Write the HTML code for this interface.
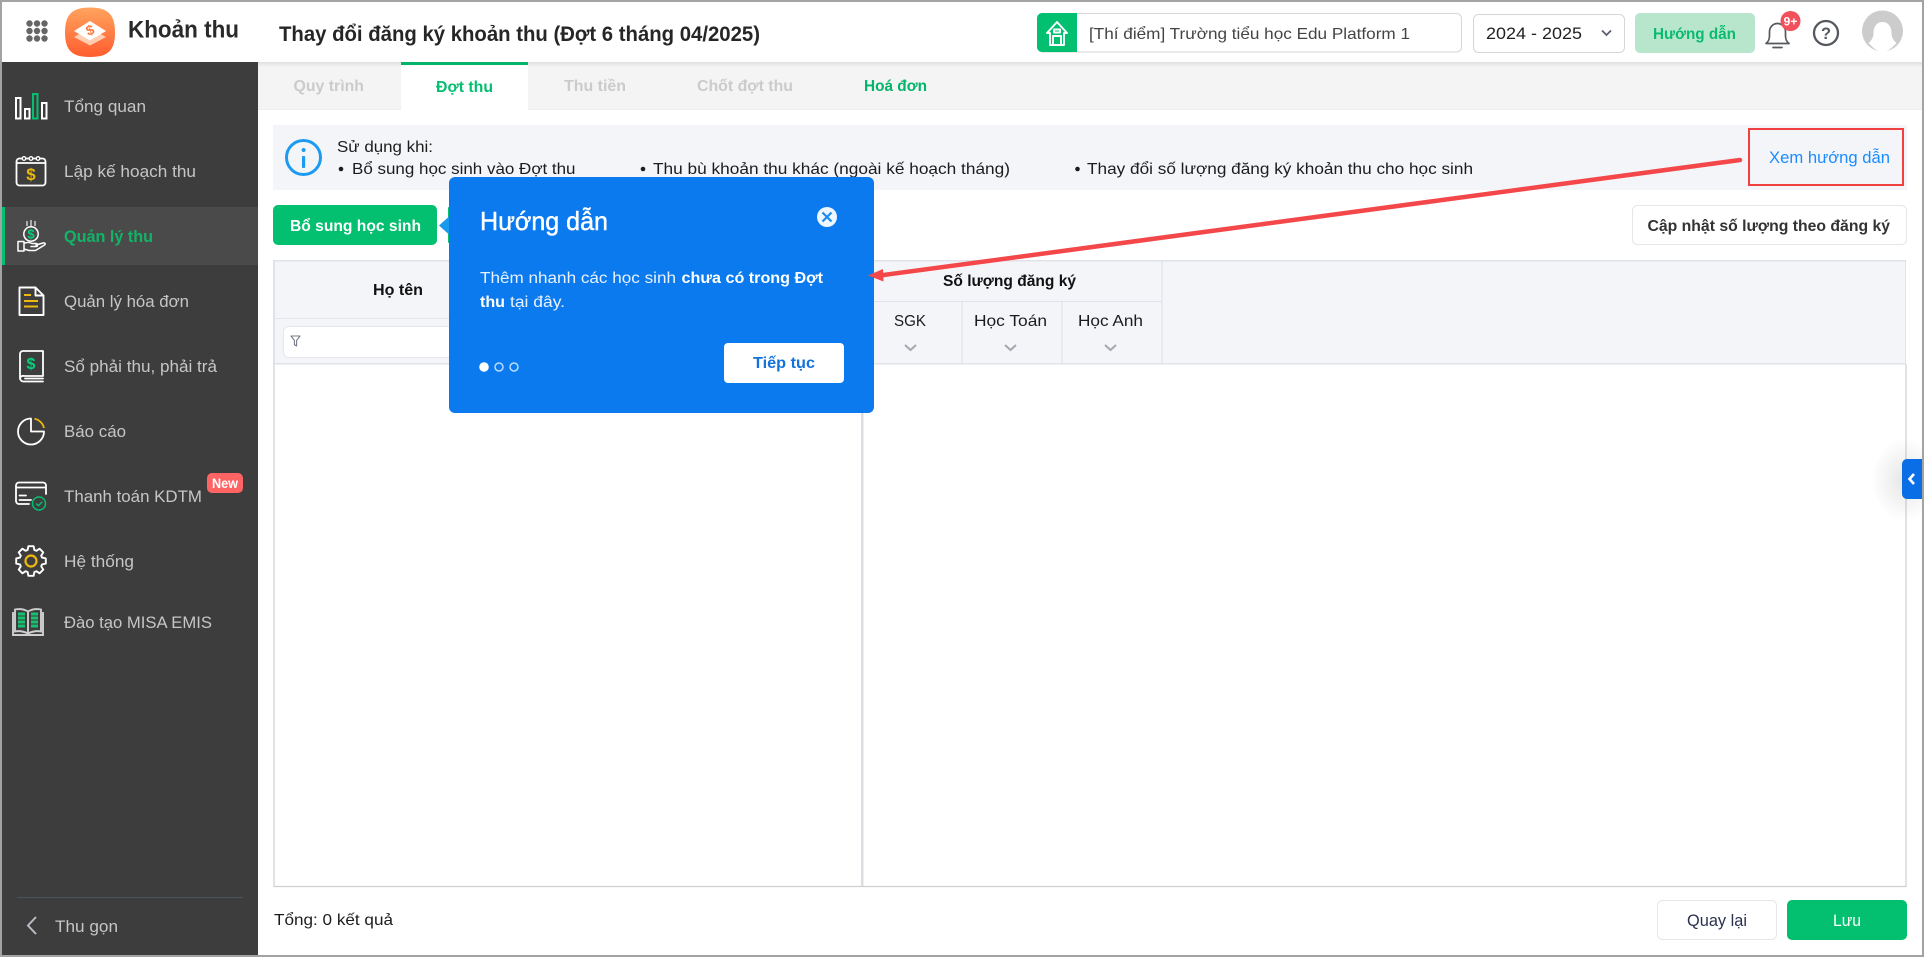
<!DOCTYPE html>
<html lang="vi">
<head>
<meta charset="utf-8">
<title>Khoản thu</title>
<style>
html,body{margin:0;padding:0;background:#fff;width:1924px;height:957px;overflow:hidden}
svg{display:block}
text{font-family:"Liberation Sans","DejaVu Sans",sans-serif}
.side{font-size:16.5px;fill:#c6c6c6}
.b{font-weight:bold}
.ban{font-size:16px;fill:#1c1c1c}
.tab{font-size:16px;font-weight:bold;fill:#cbcbcb}
.pop{font-size:15.5px;fill:#e8f2ff}
.ic{fill:none;stroke:#fff;stroke-width:1.8;stroke-linejoin:round;stroke-linecap:round}
</style>
</head>
<body>
<svg xmlns="http://www.w3.org/2000/svg" width="1924" height="957" viewBox="0 0 1924 957">
<defs>
<linearGradient id="lg" x1="0" y1="0" x2="0" y2="1"><stop offset="0" stop-color="#ffa45e"/><stop offset="1" stop-color="#ff5c2e"/></linearGradient>
<linearGradient id="sh" x1="0" y1="0" x2="0" y2="1"><stop offset="0" stop-color="#000" stop-opacity=".08"/><stop offset="1" stop-color="#000" stop-opacity="0"/></linearGradient>
<radialGradient id="tabsh"><stop offset="0" stop-color="#000" stop-opacity=".1"/><stop offset="1" stop-color="#000" stop-opacity="0"/></radialGradient>
</defs>

<!-- page -->
<rect width="1924" height="957" fill="#fff"/>

<!-- tab strip -->
<rect x="258" y="62" width="1664" height="48" fill="#f4f4f4"/>
<rect x="258" y="109" width="1664" height="1" fill="#eeeeee"/>
<rect x="401" y="62" width="127" height="48" fill="#fff"/>
<rect x="258" y="62" width="1664" height="5" fill="url(#sh)"/>
<rect x="401" y="62" width="127" height="3" fill="#03b46a"/>
<text class="tab" x="293.5" y="91" textLength="70.5" lengthAdjust="spacingAndGlyphs">Quy trình</text>
<text class="tab" x="436" y="92" textLength="57" lengthAdjust="spacingAndGlyphs" style="fill:#03bf70">Đợt thu</text>
<text class="tab" x="564" y="91" textLength="62" lengthAdjust="spacingAndGlyphs">Thu tiền</text>
<text class="tab" x="697" y="91" textLength="96" lengthAdjust="spacingAndGlyphs">Chốt đợt thu</text>
<text class="tab" x="864" y="91" textLength="63" lengthAdjust="spacingAndGlyphs" style="fill:#03b46a">Hoá đơn</text>

<!-- info banner -->
<rect x="273" y="125" width="1634" height="65" fill="#f3f5f9"/>
<circle cx="303.5" cy="157.5" r="17" fill="none" stroke="#1d9bf0" stroke-width="3"/>
<rect x="302" y="156" width="3.2" height="12" rx="1" fill="#1d9bf0"/>
<circle cx="303.6" cy="150" r="2" fill="#1d9bf0"/>
<text class="ban" x="337" y="152" textLength="96" lengthAdjust="spacingAndGlyphs">Sử dụng khi:</text>
<circle cx="341" cy="169" r="2.3" fill="#1c1c1c"/>
<text class="ban" x="352" y="174" textLength="223.5" lengthAdjust="spacingAndGlyphs">Bổ sung học sinh vào Đợt thu</text>
<circle cx="643" cy="169" r="2.3" fill="#1c1c1c"/>
<text class="ban" x="653" y="174" textLength="357" lengthAdjust="spacingAndGlyphs">Thu bù khoản thu khác (ngoài kế hoạch tháng)</text>
<circle cx="1077.5" cy="169" r="2.3" fill="#1c1c1c"/>
<text class="ban" x="1087" y="174" textLength="386" lengthAdjust="spacingAndGlyphs">Thay đổi số lượng đăng ký khoản thu cho học sinh</text>
<rect x="1749" y="129" width="154" height="56" fill="none" stroke="#f0403f" stroke-width="2"/>
<text x="1769" y="163" font-size="16.5" fill="#1a8cff" textLength="121" lengthAdjust="spacingAndGlyphs">Xem hướng dẫn</text>

<!-- action buttons -->
<rect x="273" y="205" width="164" height="40" rx="5" fill="#03bf70"/>
<text x="290" y="231" font-size="16" font-weight="bold" fill="#fff" textLength="131" lengthAdjust="spacingAndGlyphs">Bổ sung học sinh</text>
<rect x="448" y="207" width="3" height="36" rx="1" fill="#03bf70"/>
<rect x="1632.5" y="205.5" width="274" height="39" rx="5" fill="#fff" stroke="#e4e6ea"/>
<text x="1647.5" y="231" font-size="16" font-weight="bold" fill="#333" textLength="242.5" lengthAdjust="spacingAndGlyphs">Cập nhật số lượng theo đăng ký</text>

<!-- table header -->
<rect x="273" y="260" width="1633" height="104" fill="#f3f5f9"/>
<rect x="273" y="260" width="1633" height="1.5" fill="#e1e3ea"/>
<rect x="273" y="318" width="589" height="1" fill="#e4e6ec"/>
<rect x="273" y="363" width="1633" height="1.5" fill="#e1e3ea"/>
<rect x="283.5" y="326.5" width="570" height="31" rx="5" fill="#fff" stroke="#e4e6ec"/>
<path d="M291 336h9l-3.4 4.4v5.6l-2.2-1.4v-4.2z" fill="none" stroke="#777a8a" stroke-width="1.1" stroke-linejoin="round"/>
<text x="373" y="295" font-size="16" font-weight="bold" fill="#111" textLength="50" lengthAdjust="spacingAndGlyphs">Họ tên</text>
<rect x="862" y="301" width="300" height="1" fill="#e0e2e9"/>
<rect x="961.5" y="301" width="1" height="63" fill="#dcdfe8"/>
<rect x="1061.5" y="301" width="1" height="63" fill="#dcdfe8"/>
<rect x="1161.5" y="260" width="1" height="104" fill="#dcdfe8"/>
<text x="943" y="286" font-size="16" font-weight="bold" fill="#111" textLength="133" lengthAdjust="spacingAndGlyphs">Số lượng đăng ký</text>
<text x="894" y="326" font-size="16" fill="#1c1c1c" textLength="32" lengthAdjust="spacingAndGlyphs">SGK</text>
<text x="974" y="326" font-size="16" fill="#1c1c1c" textLength="73" lengthAdjust="spacingAndGlyphs">Học Toán</text>
<text x="1078" y="326" font-size="16" fill="#1c1c1c" textLength="65" lengthAdjust="spacingAndGlyphs">Học Anh</text>
<path d="M905 345l5.500 5 5.500-5M1005 345l5.500 5 5.500-5M1105 345l5.500 5 5.500-5" fill="none" stroke="#a5a7ad" stroke-width="2"/>

<!-- table borders -->
<path d="M274 364V886.500H1906V364" fill="none" stroke="#d0d0d0" stroke-width="1.200"/>
<rect x="273" y="260" width="2" height="104" fill="#dfe2ea"/>
<rect x="1905" y="260" width="1" height="104" fill="#e1e3ea"/>
<rect x="861" y="364" width="2.500" height="522" fill="#dcdde2"/>

<!-- side tab -->
<ellipse cx="1905" cy="480" rx="34" ry="42" fill="url(#tabsh)"/>
<path d="M1922 459h-15a5 5 0 0 0-5 5v30a5 5 0 0 0 5 5h15z" fill="#0a6fe6"/>
<path d="M1914 474l-4.500 5 4.500 5" fill="none" stroke="#fff" stroke-width="2.600"/>

<!-- footer -->
<text x="274" y="925" font-size="16" fill="#1c1c1c" textLength="119" lengthAdjust="spacingAndGlyphs">Tổng: 0 kết quả</text>
<rect x="1657.500" y="900.500" width="119" height="39" rx="5" fill="#fff" stroke="#e4e6ea"/>
<text x="1687" y="926" font-size="16.500" fill="#2b3050" textLength="60" lengthAdjust="spacingAndGlyphs">Quay lại</text>
<rect x="1787" y="900" width="120" height="40" rx="5" fill="#03bf70"/>
<text x="1833" y="926" font-size="16.500" fill="#fff" textLength="28" lengthAdjust="spacingAndGlyphs">Lưu</text>

<!-- sidebar -->
<rect x="2" y="62" width="256" height="893" fill="#3d3d3d"/>
<rect x="2" y="207" width="256" height="58" fill="#4a4a4a"/>
<rect x="2" y="207" width="3" height="58" fill="#03bf70"/>

<text class="side" x="64" y="112" textLength="82" lengthAdjust="spacingAndGlyphs">Tổng quan</text>
<text class="side" x="64" y="177" textLength="132" lengthAdjust="spacingAndGlyphs">Lập kế hoạch thu</text>
<text class="side b" x="64" y="242" textLength="89" lengthAdjust="spacingAndGlyphs" style="fill:#12b468">Quản lý thu</text>
<text class="side" x="64" y="307" textLength="125" lengthAdjust="spacingAndGlyphs">Quản lý hóa đơn</text>
<text class="side" x="64" y="372" textLength="153" lengthAdjust="spacingAndGlyphs">Sổ phải thu, phải trả</text>
<text class="side" x="64" y="437" textLength="62" lengthAdjust="spacingAndGlyphs">Báo cáo</text>
<text class="side" x="64" y="502" textLength="138" lengthAdjust="spacingAndGlyphs">Thanh toán KDTM</text>
<text class="side" x="64" y="567" textLength="70" lengthAdjust="spacingAndGlyphs">Hệ thống</text>
<text class="side" x="64" y="628" textLength="148" lengthAdjust="spacingAndGlyphs">Đào tạo MISA EMIS</text>
<rect x="207" y="473" width="36" height="20" rx="5" fill="#ff6464"/>
<text x="212" y="488" font-size="14" font-weight="bold" fill="#fff" textLength="26" lengthAdjust="spacingAndGlyphs">New</text>
<rect x="17" y="897" width="226" height="1" fill="#4a525c"/>
<path d="M36 917l-8 8.500 8 8.500" fill="none" stroke="#b9bcc4" stroke-width="2"/>
<text class="side" x="55" y="932" textLength="63" lengthAdjust="spacingAndGlyphs">Thu gọn</text>

<!-- icon: Tong quan -->
<g class="ic" style="stroke-width:2;stroke-linecap:butt;stroke-linejoin:miter">
<rect x="16" y="98" width="4.500" height="20.500"/>
<rect x="25" y="109" width="4.500" height="9.500"/>
<rect x="42" y="103" width="4.500" height="15.500"/>
</g>
<rect x="33" y="94" width="4.500" height="24.500" fill="none" stroke="#03bf70" stroke-width="2"/>

<!-- icon: calendar -->
<rect class="ic" x="16.500" y="158.500" width="29" height="27" rx="3"/>
<path class="ic" d="M17 163H45"/>
<circle cx="24" cy="158.500" r="1.800" fill="#3d3d3d" stroke="#fff" stroke-width="1.300"/>
<circle cx="31" cy="158.500" r="1.800" fill="#3d3d3d" stroke="#fff" stroke-width="1.300"/>
<circle cx="38" cy="158.500" r="1.800" fill="#3d3d3d" stroke="#fff" stroke-width="1.300"/>
<text x="31" y="180" font-size="17" font-weight="bold" fill="#e9b80c" text-anchor="middle">$</text>

<!-- icon: hand coin -->
<path d="M27 221v5M31 220v7M35 221v5" fill="none" stroke="#d9d9d9" stroke-width="1.400"/>
<circle cx="31" cy="234" r="7.200" fill="none" stroke="#fff" stroke-width="1.500"/>
<text x="31" y="238.500" font-size="13" font-weight="bold" fill="#03d07a" text-anchor="middle">$</text>
<path class="ic" style="stroke-width:1.500" d="M18 241.500h6v9.500h-6zM24 243.500c3-1.500 5-1.500 8 0h4c2 0 2 3 0 3h-5M36 245l7-2c2-.5 3 1 1.500 2l-9 5.500H29l-5-1.500"/>

<!-- icon: invoice -->
<path class="ic" d="M19.500 287.500h16l8 8v19.500h-24zM35.500 287.500v8h8" style="stroke-width:1.900"/>
<path d="M24 295h7M24 301h14M24 306.500h14" stroke="#eeb90e" stroke-width="2" fill="none"/>

<!-- icon: book -->
<path class="ic" d="M43 351H23a3 3 0 0 0-3 3v24a3.500 3.500 0 0 0 3.500 3.500H43M43 351v25H24a3 3 0 0 0-4 3M25 378.500h18"/>
<text x="31" y="369" font-size="16" font-weight="bold" fill="#03d07a" text-anchor="middle">$</text>

<!-- icon: pie -->
<path class="ic" d="M31 418.500A13 13 0 1 0 44 431.500H31z"/>
<path d="M34.500 418.800A12 12 0 0 1 44 428" fill="none" stroke="#eeb90e" stroke-width="1.800"/>

<!-- icon: card -->
<path class="ic" d="M29 504H19a3 3 0 0 1-3-3V485.500a3 3 0 0 1 3-3H43a3 3 0 0 1 3 3V494M16.500 487.500H45.500M19.500 495.500H26M19.500 500H31"/>
<circle cx="39" cy="503.500" r="6.500" fill="#3d3d3d" stroke="#03bf70" stroke-width="1.500"/>
<path d="M36 503.500l2.300 2.300 4-4" fill="none" stroke="#03bf70" stroke-width="1.400"/>

<!-- icon: gear -->
<g transform="translate(31 561)">
<path d="M-3.400-11-2.600-14.800 2.600-14.800 3.400-11 5.400-10.200 8.600-12.300 12.300-8.600 10.200-5.400 11-3.400 14.800-2.600 14.800 2.600 11 3.400 10.200 5.400 12.300 8.600 8.600 12.300 5.400 10.200 3.400 11 2.600 14.800-2.600 14.800-3.400 11-5.400 10.200-8.600 12.300-12.300 8.600-10.200 5.400-11 3.400-14.800 2.600-14.800-2.600-11-3.400-10.200-5.400-12.300-8.600-8.600-12.300-5.400-10.200z" fill="none" stroke="#fff" stroke-width="1.900" stroke-linejoin="round"/>
<circle r="5.500" fill="none" stroke="#eeb90e" stroke-width="2.200"/>
</g>

<!-- icon: open book -->
<path d="M13 612v23h30v-23M15 609.500c5-1 9-.5 13 2v22c-4-2-8-3-13-2zM41 609.500c-5-1-9-.5-13 2v22c4-2 8-3 13-2z" fill="none" stroke="#cfcfcf" stroke-width="1.900"/>
<path d="M18 614h7M18 618h7M18 622h7M18 626h7M31 614h7M31 618h7M31 622h7M31 626h7" stroke="#16c070" stroke-width="3" fill="none"/>

<!-- top header -->
<rect x="2" y="2" width="1920" height="60" fill="#fff"/>
<g fill="#666">
<circle cx="29.500" cy="23.500" r="3.200"/><circle cx="37" cy="23.500" r="3.200"/><circle cx="44.500" cy="23.500" r="3.200"/>
<circle cx="29.500" cy="31" r="3.200"/><circle cx="37" cy="31" r="3.200"/><circle cx="44.500" cy="31" r="3.200"/>
<circle cx="29.500" cy="38.500" r="3.200"/><circle cx="37" cy="38.500" r="3.200"/><circle cx="44.500" cy="38.500" r="3.200"/>
</g>
<path d="M90 7.500C108 7.500 115 14.500 115 32.500S108 57 90 57 65 50.500 65 32.500 72 7.500 90 7.500z" fill="url(#lg)"/>
<path d="M90 28l16 9-16 8.500-16-8.500z" fill="#ffe3d0" opacity=".8"/>
<path d="M90 21l16 10-16 9.500-16-9.500z" fill="#fff"/>
<text x="90" y="35" font-size="14" font-weight="bold" fill="#ff7a40" text-anchor="middle" transform="rotate(-20 90 30)">$</text>
<text x="128" y="37.500" font-size="24" font-weight="bold" fill="#2a2a2a" textLength="111" lengthAdjust="spacingAndGlyphs">Khoản thu</text>
<text x="279" y="41" font-size="21" font-weight="bold" fill="#262626" textLength="481" lengthAdjust="spacingAndGlyphs">Thay đổi đăng ký khoản thu (Đợt 6 tháng 04/2025)</text>

<!-- school select -->
<rect x="1037.500" y="13.500" width="424" height="38.500" rx="5" fill="#fff" stroke="#d6d6d6"/>
<path d="M1077 13H1042a5 5 0 0 0-5 5v29a5 5 0 0 0 5 5h35z" fill="#03bf70"/>
<path d="M1047 33l10-11 10 11h-3v12h-14V33zM1053 45v-9h8v9M1054 29.500h6v3h-6z" fill="none" stroke="#fff" stroke-width="1.900" stroke-linejoin="round"/>
<text x="1089" y="39" font-size="16" fill="#444" textLength="321" lengthAdjust="spacingAndGlyphs">[Thí điểm] Trường tiểu học Edu Platform 1</text>
<rect x="1473.500" y="14.500" width="151" height="38" rx="5" fill="#fff" stroke="#d6d6d6"/>
<text x="1486" y="39" font-size="16.500" fill="#222" textLength="96" lengthAdjust="spacingAndGlyphs">2024 - 2025</text>
<path d="M1602 30.500l4.500 4.500 4.500-4.500" fill="none" stroke="#5a5f70" stroke-width="1.800"/>
<rect x="1635" y="13" width="120" height="40" rx="5" fill="#b8e6cd"/>
<text x="1653" y="39" font-size="16" font-weight="bold" fill="#0abb6f" textLength="83" lengthAdjust="spacingAndGlyphs">Hướng dẫn</text>

<!-- bell -->
<path d="M1766 43.500c2.500-2 3.500-4 3.500-8v-4a8 8 0 0 1 16 0v4c0 4 1 6 3.500 8zM1773 47.500h9" fill="none" stroke="#55595f" stroke-width="1.700" stroke-linejoin="round" stroke-linecap="round"/>
<circle cx="1790.500" cy="21" r="10" fill="#f2505a"/>
<text x="1790.500" y="25.500" font-size="12" font-weight="bold" fill="#fff" text-anchor="middle">9+</text>
<!-- help -->
<circle cx="1826" cy="33" r="12" fill="none" stroke="#55595f" stroke-width="2.300"/>
<text x="1826" y="39" font-size="16.500" font-weight="bold" fill="#55595f" text-anchor="middle">?</text>
<!-- avatar -->
<circle cx="1882.500" cy="31" r="20.500" fill="#cccccc"/>
<path d="M1882.500 22c5.500 0 9 4.500 9 11 0 4 1.500 7 5 10-3 3-8 9-14 9s-11-6-14-9c3.500-3 5-6 5-10 0-6.500 3.500-11 9-11z" fill="#fff"/>

<!-- outer border -->
<rect x="0" y="0" width="1924" height="2" fill="#a3a3a3"/>
<rect x="0" y="955" width="1924" height="2" fill="#a3a3a3"/>
<rect x="0" y="0" width="2" height="957" fill="#a3a3a3"/>
<rect x="1922" y="0" width="2" height="957" fill="#a3a3a3"/>

<!-- popup -->
<path d="M439 225.500l10-9v18z" fill="#1a9aee"/>
<rect x="449" y="177" width="425" height="236" rx="6" fill="#0a7aee"/>
<text x="480" y="230" font-size="26" fill="#fff" stroke="#fff" stroke-width=".45" textLength="128" lengthAdjust="spacingAndGlyphs">Hướng dẫn</text>
<circle cx="827" cy="217" r="10" fill="#eef6ff"/>
<path d="M822.500 212.500l9 9M831.500 212.500l-9 9" stroke="#1d8aee" stroke-width="2.200" fill="none"/>
<text class="pop" x="480" y="283" textLength="196" lengthAdjust="spacingAndGlyphs">Thêm nhanh các học sinh</text>
<text class="pop b" x="681.500" y="283" textLength="141.500" lengthAdjust="spacingAndGlyphs" style="fill:#fff">chưa có trong Đợt</text>
<text class="pop b" x="480" y="307" textLength="25" lengthAdjust="spacingAndGlyphs" style="fill:#fff">thu</text>
<text class="pop" x="510" y="307" textLength="55" lengthAdjust="spacingAndGlyphs">tại đây.</text>
<circle cx="484" cy="367" r="4.800" fill="#fff"/>
<circle cx="499" cy="367" r="4" fill="none" stroke="#bcdcff" stroke-width="1.500"/>
<circle cx="514" cy="367" r="4" fill="none" stroke="#bcdcff" stroke-width="1.500"/>
<rect x="724" y="343" width="120" height="40" rx="4" fill="#fff"/>
<text x="753" y="368" font-size="16" font-weight="bold" fill="#1273dd" textLength="62" lengthAdjust="spacingAndGlyphs">Tiếp tục</text>

<!-- annotation arrow -->
<path d="M1740 160 880 275.500" stroke="#f4474a" stroke-width="4.500" stroke-linecap="round" fill="none"/>
<path d="M868 275.500l15-6.500 .5 12.500z" fill="#f4474a"/>
</svg>
</body>
</html>
